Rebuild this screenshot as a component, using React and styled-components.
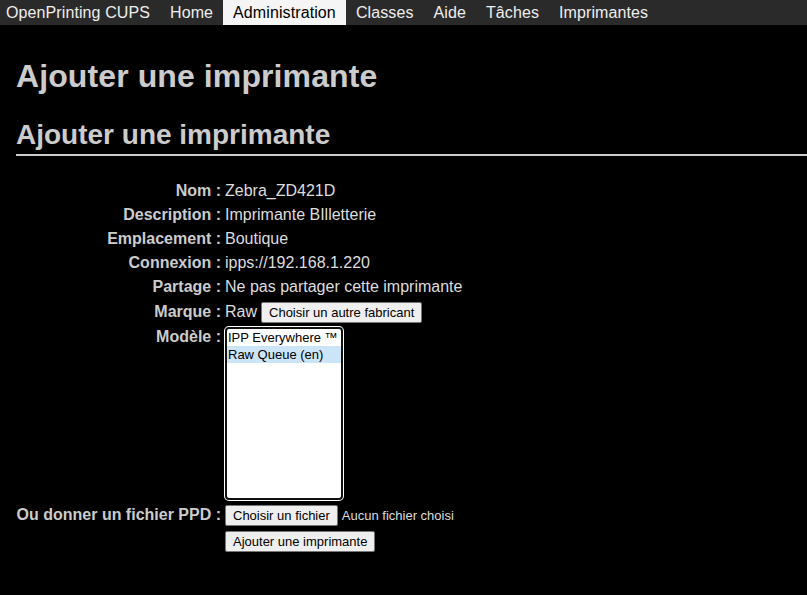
import React from "react";
import styled, { createGlobalStyle } from "styled-components";

const Global = createGlobalStyle`
  html, body { margin: 0; padding: 0; background: #000; }
  body { font-family: "Liberation Sans", Arial, sans-serif; color: #ddd; }
`;

const Header = styled.nav`
  display: flex;
  height: 25px;
  background: #2a2a2a;
  align-items: stretch;
`;

const NavLink = styled.a`
  display: flex;
  align-items: center;
  padding: 0 10px;
  font-size: 16px;
  letter-spacing: 0.1px;
  line-height: 25px;
  color: ${(p) => (p.$active ? "#000" : "#eee")};
  background: ${(p) => (p.$active ? "#f5f5f5" : "transparent")};
  text-decoration: none;
  &:first-child { padding-left: 6px; }
`;

const Main = styled.main`
  padding: 0 0 0 16px;
`;

const H1 = styled.h1`
  margin: 33px 0 0;
  font-size: 32px;
  font-weight: bold;
  color: #ccc;
  line-height: 37px;
  letter-spacing: 0.1px;
`;

const H2 = styled.h2`
  margin: 24px 0 0;
  font-size: 28px;
  font-weight: bold;
  color: #ccc;
  line-height: 32px;
  padding-bottom: 3px;
  border-bottom: 2px solid #ccc;
`;

const Form = styled.div`
  display: grid;
  grid-template-columns: 205px auto;
  column-gap: 4px;
  margin-top: 23px;
  justify-content: start;
`;

const Label = styled.div`
  text-align: right;
  font-weight: bold;
  font-size: 16px;
  color: #ccc;
  height: ${(p) => p.$h || 24}px;
  line-height: ${(p) => (p.$top ? "18px" : `${p.$h || 24}px`)};
  padding-top: ${(p) => (p.$top ? 3 : 0)}px;
  box-sizing: border-box;
  white-space: nowrap;
`;

const Value = styled.div`
  display: flex;
  align-items: ${(p) => (p.$top ? "flex-start" : "center")};
  gap: 4px;
  font-size: 16px;
  color: #ddd;
  height: ${(p) => p.$h || 24}px;
  padding-top: ${(p) => (p.$top ? 2 : 0)}px;
  box-sizing: border-box;
  white-space: nowrap;
`;

const Button = styled.button`
  font-family: "Liberation Sans", Arial, sans-serif;
  font-size: 13px;
  height: 21px;
  padding: 0 7px;
  background: #efefef;
  color: #000;
  border: 1px solid #767676;
  border-radius: 2px;
  line-height: 19px;
`;

const Note = styled.span`
  font-size: 13px;
  color: #ddd;
`;

const ListBox = styled.div`
  width: 118px;
  height: 173px;
  box-sizing: border-box;
  background: #fff;
  border: 2px solid #101010;
  border-radius: 4px;
  box-shadow: 0 0 0 1px #fff;
  padding: 0;
  overflow: hidden;
`;

const Option = styled.div`
  font-size: 13px;
  line-height: 17px;
  padding: 0 1px;
  color: #000;
  background: ${(p) => (p.$selected ? "#cce4f7" : "transparent")};
  white-space: nowrap;
  overflow: hidden;
`;

const rows = [
  ["Nom :", "Zebra_ZD421D"],
  ["Description :", "Imprimante BIlletterie"],
  ["Emplacement :", "Boutique"],
  ["Connexion :", "ipps://192.168.1.220"],
  ["Partage :", "Ne pas partager cette imprimante"],
];

export default function App() {
  return (
    <>
      <Global />
      <Header>
        <NavLink>OpenPrinting CUPS</NavLink>
        <NavLink>Home</NavLink>
        <NavLink $active>Administration</NavLink>
        <NavLink>Classes</NavLink>
        <NavLink>Aide</NavLink>
        <NavLink>Tâches</NavLink>
        <NavLink>Imprimantes</NavLink>
      </Header>
      <Main>
        <H1>Ajouter une imprimante</H1>
        <H2>Ajouter une imprimante</H2>
        <Form>
          {rows.map(([l, v]) => (
            <React.Fragment key={l}>
              <Label>{l}</Label>
              <Value>{v}</Value>
            </React.Fragment>
          ))}
          <Label $h={26}>Marque :</Label>
          <Value $h={26}>
            Raw <Button>Choisir un autre fabricant</Button>
          </Value>
          <Label $h={177} $top>Modèle :</Label>
          <Value $h={177} $top>
            <ListBox>
              <Option>IPP Everywhere ™</Option>
              <Option $selected>Raw Queue (en)</Option>
            </ListBox>
          </Value>
          <Label $h={26}>Ou donner un fichier PPD :</Label>
          <Value $h={26}>
            <Button>Choisir un fichier</Button>
            <Note>Aucun fichier choisi</Note>
          </Value>
          <Label $h={26}></Label>
          <Value $h={26}>
            <Button>Ajouter une imprimante</Button>
          </Value>
        </Form>
      </Main>
    </>
  );
}
